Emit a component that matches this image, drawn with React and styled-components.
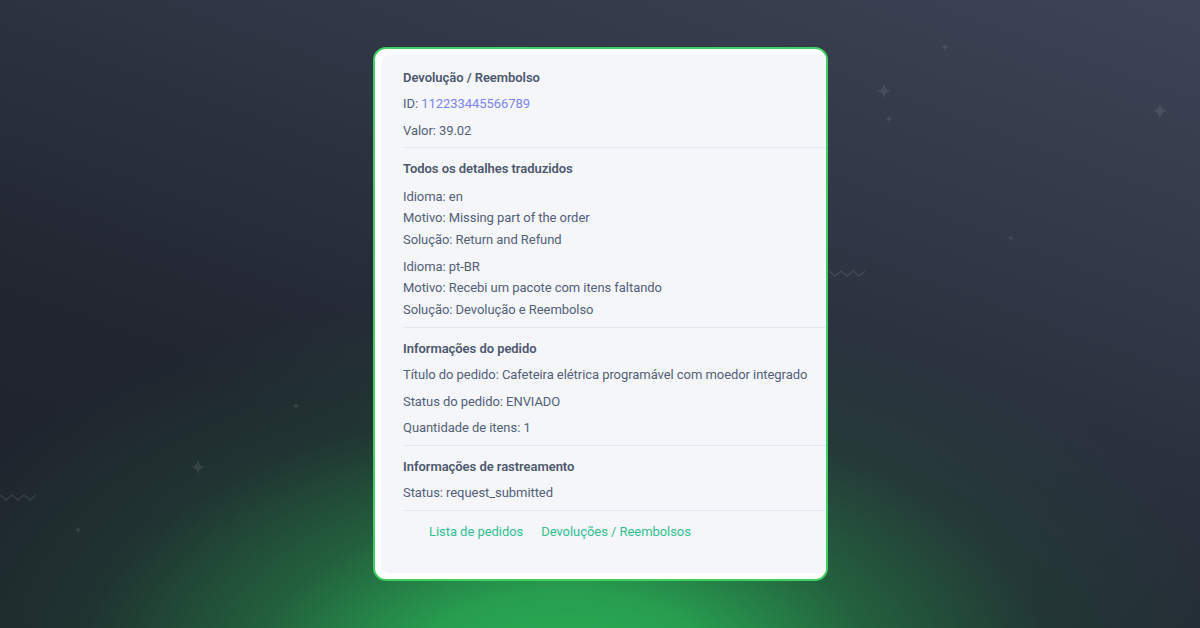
import React from 'react';
import styled, { createGlobalStyle } from 'styled-components';

const GlobalStyle = createGlobalStyle`
  html, body {
    margin: 0;
    padding: 0;
  }
  body {
    font-family: Roboto, "Liberation Sans", sans-serif;
  }
`;

const Background = styled.div`
  position: relative;
  width: 1200px;
  height: 628px;
  overflow: hidden;
  display: flex;
  align-items: center;
  justify-content: center;
  background:
    radial-gradient(ellipse 700px 390px at 47% 108%, rgba(41, 178, 86, 1) 0%, rgba(40, 168, 82, 0.92) 22%, rgba(37, 132, 70, 0.62) 45%, rgba(34, 88, 58, 0.3) 70%, rgba(31, 37, 48, 0) 100%),
    linear-gradient(200deg, #3d4456 0%, #2d3442 38%, #20252f 70%, #1e232c 100%);
`;

const Sparkle = styled.svg`
  position: absolute;
  left: ${(p) => p.x}px;
  top: ${(p) => p.y}px;
  width: ${(p) => p.size}px;
  height: ${(p) => p.size}px;
  transform: translate(-50%, -50%);
  fill: rgba(255, 255, 255, 0.09);
`;

const Zigzag = styled.svg`
  position: absolute;
  left: ${(p) => p.x}px;
  top: ${(p) => p.y}px;
  width: 36px;
  height: 10px;
  stroke: rgba(255, 255, 255, 0.1);
  fill: none;
`;

const Frame = styled.div`
  position: relative;
  width: 455px;
  height: 534px;
  margin-top: -1px;
  margin-left: 1px;
  border: 2px solid #3fd061;
  border-radius: 13px;
  background: #ffffff;
  padding: 6px 0 6px 6px;
  box-sizing: border-box;
  overflow: hidden;
`;

const Panel = styled.div`
  width: 520px;
  height: 100%;
  box-sizing: border-box;
  background: #f4f6fa;
  border-radius: 8px;
  padding: 2px 0 0 22px;
`;

const Section = styled.section`
  display: flex;
  flex-direction: column;
  gap: 6.5px;
  padding: 11px 0 6.5px;
  border-bottom: 1px solid #e4e7ee;
`;

const Heading = styled.h3`
  margin: 0;
  font-size: 13px;
  line-height: 20px;
  font-weight: 600;
  letter-spacing: -0.05px;
  color: #4d586e;
`;

const Row = styled.p`
  margin: 0;
  font-size: 13px;
  line-height: ${(p) => (p.tight ? '21.5px' : '20px')};
  font-weight: 400;
  letter-spacing: -0.06px;
  color: #535f77;
`;

const Accent = styled.span`
  color: #7b85f5;
`;

const Group = styled.div`
  display: flex;
  flex-direction: column;
  margin-top: ${(p) => (p.first ? '0' : '-1px')};
`;

const Links = styled.nav`
  display: flex;
  gap: 18px;
  padding: 11px 0 0 26px;
`;

const Link = styled.a`
  font-size: 13px;
  line-height: 20px;
  letter-spacing: -0.05px;
  color: #32bf91;
  text-decoration: none;
`;

const star = 'M12 0 C13 8 16 11 24 12 C16 13 13 16 12 24 C11 16 8 13 0 12 C8 11 11 8 12 0 Z';

const sparkles = [
  { x: 884, y: 91, size: 16 },
  { x: 889, y: 119, size: 8 },
  { x: 945, y: 47, size: 8 },
  { x: 1160, y: 111, size: 17 },
  { x: 1011, y: 238, size: 8 },
  { x: 198, y: 467, size: 16 },
  { x: 296, y: 406, size: 8 },
  { x: 78, y: 530, size: 8 },
];

function App() {
  return (
    <Background>
      <GlobalStyle />
      {sparkles.map((s, i) => (
        <Sparkle key={i} x={s.x} y={s.y} size={s.size} viewBox="0 0 24 24">
          <path d={star} />
        </Sparkle>
      ))}
      <Zigzag x={829} y={268} viewBox="0 0 36 10">
        <polyline points="0,3 6,8 12,3 18,8 24,3 30,8 36,3" strokeWidth="1.6" />
      </Zigzag>
      <Zigzag x={0} y={492} viewBox="0 0 36 10">
        <polyline points="0,3 6,8 12,3 18,8 24,3 30,8 36,3" strokeWidth="1.6" />
      </Zigzag>

      <Frame>
        <Panel>
          <Section>
            <Heading>Devolução / Reembolso</Heading>
            <Row>
              ID: <Accent>112233445566789</Accent>
            </Row>
            <Row>Valor: 39.02</Row>
          </Section>

          <Section>
            <Heading>Todos os detalhes traduzidos</Heading>
            <Group first>
              <Row tight>Idioma: en</Row>
              <Row tight>Motivo: Missing part of the order</Row>
              <Row tight>Solução: Return and Refund</Row>
            </Group>
            <Group>
              <Row tight>Idioma: pt-BR</Row>
              <Row tight>Motivo: Recebi um pacote com itens faltando</Row>
              <Row tight>Solução: Devolução e Reembolso</Row>
            </Group>
          </Section>

          <Section>
            <Heading>Informações do pedido</Heading>
            <Row>Título do pedido: Cafeteira elétrica programável com moedor integrado</Row>
            <Row>Status do pedido: ENVIADO</Row>
            <Row>Quantidade de itens: 1</Row>
          </Section>

          <Section>
            <Heading>Informações de rastreamento</Heading>
            <Row>Status: request_submitted</Row>
          </Section>

          <Links>
            <Link href="#">Lista de pedidos</Link>
            <Link href="#">Devoluções / Reembolsos</Link>
          </Links>
        </Panel>
      </Frame>
    </Background>
  );
}

export default App;
